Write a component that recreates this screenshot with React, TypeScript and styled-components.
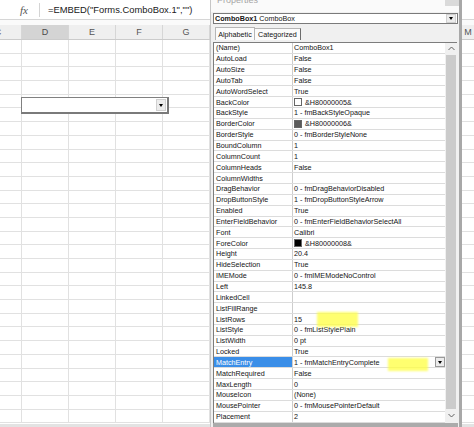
import React from "react";
import styled, { createGlobalStyle } from "styled-components";

const GlobalStyle = createGlobalStyle`
  html, body {
    margin: 0;
    padding: 0;
    background: #ffffff;
  }
  body {
    font-family: "Liberation Sans", Arial, sans-serif;
  }
`;

const COLUMNS = ["C", "D", "E", "F", "G", "H", "I", "J", "K", "L", "M"];
// columns that sit fully behind the Properties window get no label
const COVERED = ["H", "I", "J", "K", "L"];
const SHEET_ROWS = 28;

interface IProperty {
    name: string;
    value: string;
    swatch?: string;
    selected?: boolean;
}

const PROPERTIES: IProperty[] = [
    { name: "(Name)", value: "ComboBox1" },
    { name: "AutoLoad", value: "False" },
    { name: "AutoSize", value: "False" },
    { name: "AutoTab", value: "False" },
    { name: "AutoWordSelect", value: "True" },
    { name: "BackColor", value: "&H80000005&", swatch: "#ffffff" },
    { name: "BackStyle", value: "1 - fmBackStyleOpaque" },
    { name: "BorderColor", value: "&H80000006&", swatch: "#5a5a5a" },
    { name: "BorderStyle", value: "0 - fmBorderStyleNone" },
    { name: "BoundColumn", value: "1" },
    { name: "ColumnCount", value: "1" },
    { name: "ColumnHeads", value: "False" },
    { name: "ColumnWidths", value: "" },
    { name: "DragBehavior", value: "0 - fmDragBehaviorDisabled" },
    { name: "DropButtonStyle", value: "1 - fmDropButtonStyleArrow" },
    { name: "Enabled", value: "True" },
    { name: "EnterFieldBehavior", value: "0 - fmEnterFieldBehaviorSelectAll" },
    { name: "Font", value: "Calibri" },
    { name: "ForeColor", value: "&H80000008&", swatch: "#000000" },
    { name: "Height", value: "20.4" },
    { name: "HideSelection", value: "True" },
    { name: "IMEMode", value: "0 - fmIMEModeNoControl" },
    { name: "Left", value: "145.8" },
    { name: "LinkedCell", value: "" },
    { name: "ListFillRange", value: "" },
    { name: "ListRows", value: "15" },
    { name: "ListStyle", value: "0 - fmListStylePlain" },
    { name: "ListWidth", value: "0 pt" },
    { name: "Locked", value: "True" },
    { name: "MatchEntry", value: "1 - fmMatchEntryComplete", selected: true },
    { name: "MatchRequired", value: "False" },
    { name: "MaxLength", value: "0" },
    { name: "MouseIcon", value: "(None)" },
    { name: "MousePointer", value: "0 - fmMousePointerDefault" },
    { name: "Placement", value: "2" },
];

export default function App() {
    return (
        <>
            <GlobalStyle />
            <Screen>
                <Sheet>
                    <FormulaBar>
                        <FxCell>fx</FxCell>
                        <FormulaText>=EMBED("Forms.ComboBox.1","")</FormulaText>
                    </FormulaBar>
                    <HeaderGap />
                    <ColumnHeaderRow>
                        {COLUMNS.map((c) => (
                            <ColHead key={c} $selected={c === "D"}>
                                {COVERED.includes(c) ? "" : c}
                            </ColHead>
                        ))}
                    </ColumnHeaderRow>
                    <SheetBody>
                        {Array.from({ length: SHEET_ROWS }).map((_, r) => (
                            <SheetRow key={`row-${r}`}>
                                {COLUMNS.map((c) => <SheetCell key={`${c}-${r}`} />)}
                            </SheetRow>
                        ))}
                    </SheetBody>
                    <SheetFooter />
                </Sheet>

                <SheetCombo>
                    <DropButton $w={10} $h={12}>
                        <DownTriangle />
                    </DropButton>
                </SheetCombo>

                <PropertiesWindow>
                    <TitleBar>
                        <TitleText>Properties</TitleText>
                        <CloseButton />
                    </TitleBar>

                    <ObjectSelect>
                        <strong>ComboBox1</strong>&nbsp;ComboBox
                        <Spacer />
                        <DropButton $w={10} $h={9}>
                            <DownTriangle />
                        </DropButton>
                    </ObjectSelect>

                    <Tabs>
                        <Tab $width={40} $active>Alphabetic</Tab>
                        <Tab $width={46} $last>Categorized</Tab>
                    </Tabs>

                    <GridFrame>
                        <PropList>
                            {PROPERTIES.map((p) => (
                                <PropRow key={p.name}>
                                    <NameCell $selected={p.selected}>{p.name}</NameCell>
                                    <ValueCell>
                                        {p.swatch ? <Swatch $color={p.swatch} /> : null}
                                        <span>{p.value}</span>
                                        {p.selected ? (
                                            <>
                                                <Spacer />
                                                <DropButton $w={10} $h={10} $bordered>
                                                    <DownTriangle />
                                                </DropButton>
                                            </>
                                        ) : null}
                                    </ValueCell>
                                </PropRow>
                            ))}
                        </PropList>
                        <ScrollBar>
                            <ScrollArrow>
                                <svg width="7" height="5" viewBox="0 0 7 5">
                                    <polyline points="0.5,4 3.5,1 6.5,4" fill="none" stroke="#606060" strokeWidth="1" />
                                </svg>
                            </ScrollArrow>
                            <Thumb />
                            <ScrollArrow>
                                <svg width="7" height="5" viewBox="0 0 7 5">
                                    <polyline points="0.5,1 3.5,4 6.5,1" fill="none" stroke="#606060" strokeWidth="1" />
                                </svg>
                            </ScrollArrow>
                        </ScrollBar>
                    </GridFrame>
                    <BottomEdge />
                </PropertiesWindow>

                {/* highlighter marks drawn over the screenshot */}
                <Marker $left={317} $top={312} $w={41} $h={15} />
                <Marker $left={388} $top={358} $w={40} $h={13} />
            </Screen>
        </>
    );
}

const Screen = styled.div`
  position: relative;
  width: 474px;
  height: 427px;
  overflow: hidden;
  background: #ffffff;
`;

const Sheet = styled.div`
  display: flex;
  flex-direction: column;
  height: 100%;
`;

const FormulaBar = styled.div`
  display: flex;
  align-items: center;
  height: 20px;
  box-sizing: border-box;
  border-bottom: 1px solid #d6d6d6;
  background: #ffffff;
`;

const FxCell = styled.div`
  width: 40px;
  height: 14px;
  box-sizing: border-box;
  display: flex;
  align-items: center;
  justify-content: flex-end;
  padding-right: 11px;
  border-right: 1px solid #d4d4d4;
  font-family: "Liberation Serif", "Times New Roman", serif;
  font-style: italic;
  font-size: 11px;
  color: #555555;
`;

const FormulaText = styled.div`
  padding-left: 8px;
  font-size: 9.4px;
  color: #202020;
  white-space: nowrap;
`;

const HeaderGap = styled.div`
  height: 5px;
  background: #fafafa;
`;

const ColumnHeaderRow = styled.div`
  display: flex;
  margin-left: -25px;
  height: 15px;
  box-sizing: border-box;
  background: #efefef;
  border-bottom: 1px solid #cbcbcb;
`;

const ColHead = styled.div<{ $selected?: boolean }>`
  flex: 0 0 47px;
  box-sizing: border-box;
  display: flex;
  align-items: center;
  justify-content: center;
  border-right: 1px solid #d6d6d6;
  font-size: 9px;
  color: ${(p) => (p.$selected ? "#4a4a4a" : "#555555")};
  background: ${(p) => (p.$selected ? "#d4d4d4" : "transparent")};
`;

const SheetBody = styled.div`
  flex: 1;
  overflow: hidden;
`;

const SheetRow = styled.div`
  display: flex;
  margin-left: -25px;
  height: 13.7px;
  box-sizing: border-box;
  border-bottom: 1px solid #e1e1e1;
`;

const SheetCell = styled.div`
  flex: 0 0 47px;
  box-sizing: border-box;
  border-right: 1px solid #e1e1e1;
`;

const SheetFooter = styled.div`
  height: 3px;
  background: #e3e3e3;
`;

const SheetCombo = styled.div`
  position: absolute;
  left: 21px;
  top: 97px;
  width: 148px;
  height: 17px;
  box-sizing: border-box;
  display: flex;
  align-items: center;
  justify-content: flex-end;
  padding-right: 1px;
  background: #ffffff;
  border: 1px solid #808080;
  border-right: 2px solid #7a7a7a;
  border-bottom: 2px solid #7a7a7a;
`;

const DropButton = styled.div<{ $w: number; $h: number; $bordered?: boolean }>`
  width: ${(p) => p.$w}px;
  height: ${(p) => p.$h}px;
  box-sizing: border-box;
  display: flex;
  align-items: center;
  justify-content: center;
  background: #ececec;
  border: ${(p) => (p.$bordered ? "1px solid #9a9a9a" : "1px solid #d0d0d0")};
  flex-shrink: 0;
`;

const DownTriangle = styled.div`
  width: 0;
  height: 0;
  border-left: 2.5px solid transparent;
  border-right: 2.5px solid transparent;
  border-top: 3px solid #000000;
`;

const PropertiesWindow = styled.div`
  position: absolute;
  left: 210px;
  top: -12px;
  width: 252px;
  box-sizing: border-box;
  display: flex;
  flex-direction: column;
  padding: 0 1px 0 2px;
  background: #f0f0f0;
  border-left: 1px solid #c6c6c6;
  border-right: 3px solid #a8a8a8;
  font-family: "Liberation Sans", Arial, sans-serif;
  font-size: 7.2px;
  color: #141414;
`;

const TitleBar = styled.div`
  display: flex;
  align-items: center;
  justify-content: space-between;
  height: 24px;
  margin: 0 -1px 0 -2px;
  padding-left: 6px;
  background: #fafafa;
`;

const TitleText = styled.span`
  font-size: 9px;
  color: #a6a6a6;
`;

const CloseButton = styled.div`
  align-self: flex-start;
  width: 14px;
  height: 18px;
  background: #dadada;
`;

const ObjectSelect = styled.div`
  display: flex;
  align-items: center;
  margin-top: 1px;
  height: 11px;
  box-sizing: border-box;
  padding: 0 1px;
  border: 1px solid #7a7a7a;
  background: #ffffff;
  white-space: nowrap;

  strong {
    font-weight: bold;
  }
`;

const Spacer = styled.div`
  flex: 1;
`;

const Tabs = styled.div`
  display: flex;
  align-items: flex-end;
  margin-top: 3px;
  padding-left: 2px;
  height: 13px;
`;

const Tab = styled.div<{ $width: number; $active?: boolean; $last?: boolean }>`
  flex: 0 0 ${(p) => p.$width}px;
  height: ${(p) => (p.$active ? 13 : 12)}px;
  box-sizing: border-box;
  display: flex;
  align-items: center;
  justify-content: center;
  overflow: hidden;
  background: #fbfbfb;
  border: 1px solid #b6b6b6;
  border-bottom: none;
  border-left-width: ${(p) => (p.$last ? 0 : 1)}px;
  border-right-color: ${(p) => (p.$last ? "#6c6c6c" : "#b6b6b6")};
  font-size: 7.2px;
  white-space: nowrap;
`;

const GridFrame = styled.div`
  display: flex;
  margin-top: 2px;
  margin-right: 1px;
  height: 381px;
  box-sizing: border-box;
  border-top: 1px solid #7d7d7d;
  border-left: 1px solid #7d7d7d;
  background: #ffffff;
  overflow: hidden;
`;

const PropList = styled.div`
  flex: 1;
  display: flex;
  flex-direction: column;
  min-width: 0;
`;

const PropRow = styled.div`
  display: flex;
  flex: 0 0 10.85px;
  height: 10.85px;
  box-sizing: border-box;
  border-bottom: 1px solid #dcdcdc;
`;

const NameCell = styled.div<{ $selected?: boolean }>`
  flex: 0 0 79px;
  box-sizing: border-box;
  display: flex;
  align-items: center;
  padding-left: 2px;
  border-right: 1px solid #cdcdcd;
  white-space: nowrap;
  overflow: hidden;
  background: ${(p) => (p.$selected ? "#3a8ee8" : "transparent")};
  color: ${(p) => (p.$selected ? "#ffffff" : "#141414")};
`;

const ValueCell = styled.div`
  flex: 1;
  display: flex;
  align-items: center;
  gap: 2px;
  padding-left: 1px;
  white-space: nowrap;
  overflow: hidden;
`;

const Swatch = styled.div<{ $color: string }>`
  width: 8px;
  height: 8px;
  box-sizing: border-box;
  border: 1px solid #666666;
  background: ${(p) => p.$color};
  margin-right: 1px;
  flex-shrink: 0;
`;

const ScrollBar = styled.div`
  flex: 0 0 12px;
  display: flex;
  flex-direction: column;
  padding-bottom: 2px;
  background: #f0f0f0;
`;

const ScrollArrow = styled.div`
  height: 11px;
  display: flex;
  align-items: center;
  justify-content: center;
`;

const Thumb = styled.div`
  flex: 1;
  margin: 1px 1px;
  background: #cbcbcb;
`;

const BottomEdge = styled.div`
  height: 8px;
  background: #ababab;
`;

const Marker = styled.div<{ $left: number; $top: number; $w: number; $h: number }>`
  position: absolute;
  left: ${(p) => p.$left}px;
  top: ${(p) => p.$top}px;
  width: ${(p) => p.$w}px;
  height: ${(p) => p.$h}px;
  background: rgba(255, 255, 70, 0.78);
  filter: blur(1.2px);
  pointer-events: none;
`;
